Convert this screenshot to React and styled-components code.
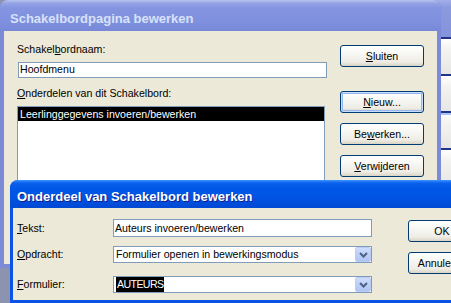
import React from 'react';
import styled, { createGlobalStyle, css } from 'styled-components';

const Global = createGlobalStyle`
  html, body { margin: 0; padding: 0; background: #8C93B0; overflow: hidden; }
  * { box-sizing: border-box; }
`;

const Desktop = styled.div`
  position: relative;
  width: 451px;
  height: 303px;
  overflow: hidden;
  background: #8C93B0;
  font-family: "Liberation Sans", Arial, sans-serif;
  font-size: 10.6px;
  color: #000;
`;

const BehindWindow = styled.div`
  position: absolute;
  left: 430px;
  top: 0;
  width: 30px;
  height: 181px;
  display: flex;
  flex-direction: column;
  background: #8796DC;
`;

const BehindHeader = styled.div`
  flex: none;
  height: 37px;
  background: linear-gradient(#A3AFEA, #8B99DE 20%, #8593DA);
`;

const BehindRow = styled.div`
  flex: none;
  height: 37px;
  border-top: 2px solid #22358A;
  background: linear-gradient(#FFFFFF, #F3F3F1 30%, #E6E6E4);
  ${p => p.$accent && css`box-shadow: inset 0 2px 0 #A9C3F5;`}
`;

const Window = styled.div`
  position: absolute;
  left: ${p => p.$x}px;
  top: ${p => p.$y}px;
  width: ${p => p.$w}px;
  height: ${p => p.$h}px;
  display: flex;
  flex-direction: column;
  border-radius: 8px 8px 0 0;
  padding: 0 ${p => p.$frame}px ${p => p.$frame}px;
  background: ${p => (p.$active ? '#0A53E4' : '#7B8BD7')};
`;

const TitleBar = styled.div`
  flex: none;
  height: ${p => p.$h}px;
  margin: 0 -${p => p.$frame}px;
  padding-left: ${p => p.$pad}px;
  padding-top: ${p => p.$shift}px;
  display: flex;
  align-items: center;
  border-radius: 8px 8px 0 0;
  font: bold 13px "Liberation Sans", Arial, sans-serif;
  white-space: nowrap;
  ${p =>
    p.$active
      ? css`
          color: #fff;
          text-shadow: 1px 1px 0 #0F1E8C;
          background: linear-gradient(#3D95FF 0, #0A61EC 3px, #0058E8 8px, #0054E3 60%, #0049D3 100%);
        `
      : css`
          color: #D8E2F8;
          background: linear-gradient(#BAC5F0 0, #95A4E6 3px, #8494E0 8px, #7F90DF 70%, #7888D8 100%);
        `}
`;

const Client = styled.div`
  flex: 1;
  min-height: 0;
  background: #ECE9D8;
  display: flex;
  overflow: hidden;
`;

const LeftColumn = styled.div`
  display: flex;
  flex-direction: column;
  width: 308px;
  padding-top: 12px;
  margin-left: 13px;
`;

const ButtonColumn = styled.div`
  display: flex;
  flex-direction: column;
  padding-top: ${p => p.$top}px;
  margin-left: ${p => p.$gap}px;
`;

const Label = styled.div`
  height: 13px;
  line-height: 13px;
  white-space: nowrap;
  margin-top: ${p => p.$mt || 0}px;
`;

const Key = styled.span`
  text-decoration: underline;
  text-underline-offset: 1px;
`;

const TextBox = styled.div`
  height: ${p => p.$h || 17}px;
  width: ${p => (p.$w ? `${p.$w}px` : 'auto')};
  margin-top: ${p => p.$mt || 0}px;
  margin-left: ${p => p.$ml || 0}px;
  border: 1px solid #7F9DB9;
  background: #fff;
  display: flex;
  align-items: center;
  padding-left: 1px;
  line-height: 13px;
  white-space: nowrap;
  overflow: hidden;
`;

const ListBox = styled.div`
  margin-top: 6px;
  width: 308px;
  height: 170px;
  border: 1px solid #7F9DB9;
  background: #fff;
`;

const ListItem = styled.div`
  height: 14px;
  line-height: 14px;
  padding-left: 2px;
  white-space: nowrap;
  background: ${p => (p.$selected ? '#000' : 'transparent')};
  color: ${p => (p.$selected ? '#fff' : '#000')};
`;

const Button = styled.button`
  flex: none;
  width: ${p => p.$w || 84}px;
  height: 22px;
  margin: ${p => p.$mt || 0}px 0 0 0;
  padding: 0;
  font: inherit;
  color: #000;
  border: 1px solid #003C74;
  border-radius: 3px;
  background: linear-gradient(#FFFFFF 0%, #F8F8F5 35%, #EEECE5 80%, #D9D3C4 100%);
  box-shadow: ${p => (p.$default ? 'inset 0 0 0 1px #C8DCFB, inset 0 0 0 2px #97B6EC' : 'none')};
  text-align: center;
  white-space: nowrap;
`;

const FrontClient = styled(Client)`
  padding-left: 4px;
`;

const FieldArea = styled.div`
  display: flex;
  flex-direction: column;
  padding-top: 11px;
`;

const FieldRow = styled.div`
  display: grid;
  grid-template-columns: 96px 259px;
  align-items: center;
  margin-top: ${p => p.$mt || 0}px;
`;

const ComboText = styled.span`
  flex: 1;
  padding-left: 1px;
  overflow: hidden;
`;

const Selected = styled.span`
  display: inline-block;
  height: 15px;
  line-height: 15px;
  padding: 0 1px;
  background: #000;
  color: #fff;
  letter-spacing: -0.6px;
`;

const DropButton = styled.span`
  flex: none;
  align-self: stretch;
  width: 16px;
  margin: 0 0 0 auto;
  border: 1px solid #BACCF6;
  border-radius: 2px;
  background: linear-gradient(#D0DDFC, #BCCFF8 50%, #AFC4F4);
  display: flex;
  align-items: center;
  justify-content: center;
`;

function Chevron() {
  return (
    <svg width="9" height="6" viewBox="0 0 9 6" aria-hidden="true">
      <path d="M1 1 L4.5 4.5 L8 1" stroke="#4D6185" strokeWidth="2" fill="none" />
    </svg>
  );
}

function Combo({ children, h }) {
  return (
    <TextBox $h={h}>
      <ComboText>{children}</ComboText>
      <DropButton>
        <Chevron />
      </DropButton>
    </TextBox>
  );
}

export default function App() {
  return (
    <Desktop>
      <Global />
      <BehindWindow>
        <BehindHeader />
        <BehindRow />
        <BehindRow />
        <BehindRow $accent />
        <BehindRow />
      </BehindWindow>

      <Window $x={0} $y={0} $w={441} $h={268} $frame={4}>
        <TitleBar $h={31} $frame={4} $pad={10} $shift={5}>
          Schakelbordpagina bewerken
        </TitleBar>
        <Client>
          <LeftColumn>
            <Label>
              Schakel<Key>b</Key>ordnaam:
            </Label>
            <TextBox $mt={6} $ml={1} $w={309}>
              Hoofdmenu
            </TextBox>
            <Label $mt={9}>
              <Key>O</Key>nderdelen van dit Schakelbord:
            </Label>
            <ListBox>
              <ListItem $selected>Leerlinggegevens invoeren/bewerken</ListItem>
            </ListBox>
          </LeftColumn>
          <ButtonColumn $top={14} $gap={15}>
            <Button>
              <Key>S</Key>luiten
            </Button>
            <Button $mt={24} $default>
              <Key>N</Key>ieuw...
            </Button>
            <Button $mt={10}>
              Be<Key>w</Key>erken...
            </Button>
            <Button $mt={10}>
              <Key>V</Key>erwijderen
            </Button>
          </ButtonColumn>
        </Client>
      </Window>

      <Window $x={10} $y={180} $w={520} $h={123} $frame={3} $active>
        <TitleBar $h={28} $frame={3} $pad={7} $shift={4} $active>
          Onderdeel van Schakelbord bewerken
        </TitleBar>
        <FrontClient>
          <FieldArea>
            <FieldRow>
              <Label>
                <Key>T</Key>ekst:
              </Label>
              <TextBox $h={18}>Auteurs invoeren/bewerken</TextBox>
            </FieldRow>
            <FieldRow $mt={9}>
              <Label>
                <Key>O</Key>pdracht:
              </Label>
              <Combo h={17}>Formulier openen in bewerkingsmodus</Combo>
            </FieldRow>
            <FieldRow $mt={13}>
              <Label>
                <Key>F</Key>ormulier:
              </Label>
              <Combo h={17}>
                <Selected>AUTEURS</Selected>
              </Combo>
            </FieldRow>
          </FieldArea>
          <ButtonColumn $top={12} $gap={36}>
            <Button $w={68}>OK</Button>
            <Button $w={68} $mt={10}>Annuleren</Button>
          </ButtonColumn>
        </FrontClient>
      </Window>
    </Desktop>
  );
}
